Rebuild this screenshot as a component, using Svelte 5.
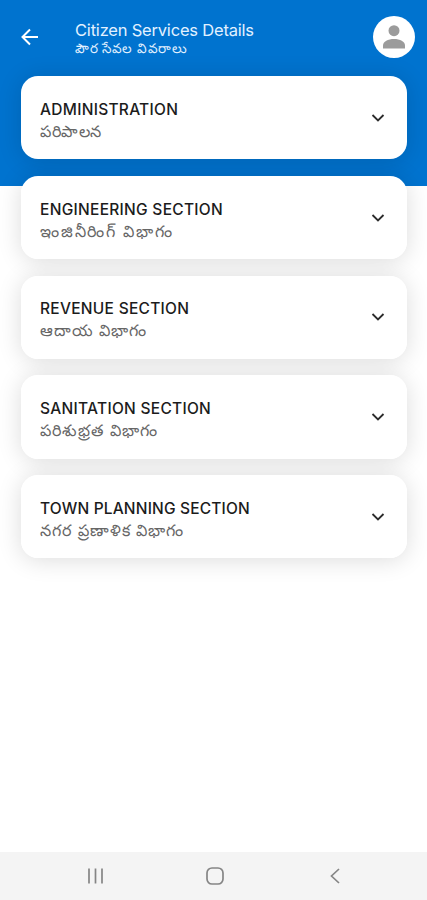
<script lang="ts">
  const secciones = [
    { id: "administration", title: "ADMINISTRATION", local: "పరిపాలన" },
    { id: "engineering", title: "ENGINEERING SECTION", local: "ఇంజినీరింగ్ విభాగం" },
    { id: "revenue", title: "REVENUE SECTION", local: "ఆదాయ విభాగం" },
    { id: "sanitation", title: "SANITATION SECTION", local: "పరిశుభ్రత విభాగం" },
    { id: "planning", title: "TOWN PLANNING SECTION", local: "నగర ప్రణాళిక విభాగం" },
  ];
</script>

<div class="screen">
  <header>
    <button class="back" aria-label="Back">
      <svg width="18" height="18" viewBox="0 0 18 18">
        <path d="M17 9H1.5M9 1.5L1.5 9L9 16.5" fill="none" stroke="white" stroke-width="2" />
      </svg>
    </button>
    <div class="heading">
      <h1>Citizen Services Details</h1>
      <p lang="te">పౌర సేవల వివరాలు</p>
    </div>
    <button class="avatar" aria-label="Profile">
      <svg width="22" height="24" viewBox="0 0 22 24">
        <circle cx="11" cy="5.7" r="5.5" />
        <path d="M0 23.5V20.5C0 16.5 5 14 11 14S22 16.5 22 20.5V23.5Z" />
      </svg>
    </button>
  </header>

  <main>
    {#each secciones as seccion (seccion.id)}
      <button class="card">
        <span class="labels">
          <span class="title {seccion.id}">{seccion.title}</span>
          <span class="local {seccion.id}" lang="te">{seccion.local}</span>
        </span>
        <svg width="14" height="10" viewBox="0 0 14 10">
          <path d="M1.5 2L7 7.5L12.5 2" fill="none" stroke="#2b2b2b" stroke-width="1.8" />
        </svg>
      </button>
    {/each}
  </main>

  <nav>
    <button aria-label="Recent apps">
      <svg width="18" height="18" viewBox="0 0 18 18">
        <path d="M3 1.5V16.5M9.5 1.5V16.5M16 1.5V16.5" />
      </svg>
    </button>
    <button aria-label="Home">
      <svg width="18" height="18" viewBox="0 0 18 18">
        <rect x="1" y="1" width="16" height="16" rx="5" />
      </svg>
    </button>
    <button aria-label="Back">
      <svg width="18" height="18" viewBox="0 0 18 18">
        <path d="M13 2L5.500 9L13 16" />
      </svg>
    </button>
  </nav>
</div>

<style>
  .screen {
    width: 427px;
    height: 900px;
    display: flex;
    flex-direction: column;
    overflow: hidden;
    background: linear-gradient(#0073cf 186px, #fff 186px);
    font-family: Inter, "Noto Sans", sans-serif;
  }

  button {
    border: none;
    background: none;
    padding: 0;
    margin: 0;
    font: inherit;
    cursor: pointer;
  }

  svg {
    display: block;
  }

  header {
    display: flex;
    align-items: center;
    height: 76px;
    box-sizing: border-box;
    padding: 0 12px 3px 21px;
  }

  .back {
    width: 54px;
  }

  .heading {
    flex: 1;
    color: #e2f1ff;
    white-space: nowrap;
    padding-top: 4px;
  }

  h1 {
    margin: 0;
    font-size: 16.5px;
    line-height: 20px;
    font-weight: 400;
    letter-spacing: -0.2px;
  }

  .heading p {
    margin: 0;
    font-size: 13.5px;
    line-height: 17px;
    letter-spacing: 0.5px;
  }

  .avatar {
    width: 42px;
    height: 42px;
    border-radius: 50%;
    background: #fff;
    display: flex;
    align-items: center;
    justify-content: center;
  }

  .avatar svg {
    fill: #9b9b9b;
  }

  main {
    flex: 1;
    display: flex;
    flex-direction: column;
    gap: 16.5px;
    padding: 0.3px 20.5px 0 21px;
    isolation: isolate;
  }

  .card {
    position: relative;
    display: flex;
    align-items: center;
    justify-content: space-between;
    height: 83.2px;
    box-sizing: border-box;
    padding: 0 22px 0 19px;
    border-radius: 17px;
    background: #fff;
    text-align: left;
  }

  /* shadow sits under every card, so neighbours stay white */
  .card::before {
    content: "";
    position: absolute;
    inset: 0;
    z-index: -1;
    border-radius: 17px;
    box-shadow: 0 2px 24px rgba(0, 0, 0, 0.14);
  }

  .labels {
    display: flex;
    flex-direction: column;
    white-space: nowrap;
    padding-top: 4px;
  }

  .title {
    font-size: 15.5px;
    line-height: 22px;
    font-weight: 500;
    letter-spacing: 0.28px;
    color: #1c1c1c;
  }

  .title.planning {
    letter-spacing: 0.17px;
  }

  .local {
    font-size: 16px;
    line-height: 20px;
    font-weight: 300;
    letter-spacing: 1px;
    color: #666;
  }

  .local.administration {
    letter-spacing: 0.5px;
  }

  .local.engineering {
    letter-spacing: 1.8px;
  }

  .local.revenue {
    letter-spacing: 0.9px;
  }

  nav {
    display: flex;
    justify-content: center;
    align-items: center;
    gap: 102px;
    height: 48px;
    padding-left: 3px;
    background: #f4f4f4;
  }

  nav svg {
    fill: none;
    stroke: #858585;
    stroke-width: 1.7;
  }
</style>
